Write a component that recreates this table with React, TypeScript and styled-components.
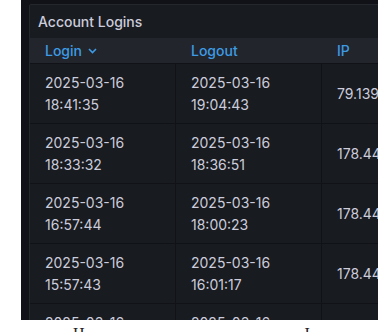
import React from "react";
import styled, { createGlobalStyle } from "styled-components";

const GlobalStyle = createGlobalStyle`
  body {
    margin: 0;
    background: #ffffff;
    font-family: Inter, "Noto Sans", sans-serif;
  }
`;

const Frame = styled.div`
  margin-left: 21px;
  width: 357px;
  height: 320px;
  background-color: #111217;
  overflow: hidden;
  padding: 4px 0 0 8px;
  box-sizing: border-box;
`;

const Panel = styled.div`
  width: 420px;
  background-color: #181b1f;
  border: 1px solid #24272d;
  border-radius: 2px;
`;

const PanelTitle = styled.div`
  height: 33px;
  display: flex;
  align-items: center;
  padding-left: 8px;
  color: #ccccdc;
  font-size: 14px;
  font-weight: 500;
`;

const Table = styled.div`
  display: grid;
  grid-template-columns: 146px 146px 146px;
`;

const HeadCell = styled.div`
  height: 25px;
  display: flex;
  align-items: center;
  padding-left: 15px;
  background-color: #22252b;
  color: #3d9be6;
  font-size: 14px;
  font-weight: 500;
  border-bottom: 1px solid #111217;
  gap: 6px;
`;

const Cell = styled.div<{ last?: boolean }>`
  height: 60px;
  display: flex;
  flex-direction: column;
  justify-content: center;
  padding-left: 15px;
  color: #ccccdc;
  font-size: 14px;
  line-height: 22px;
  white-space: nowrap;
  border-bottom: 1px solid #111217;
  border-right: ${p => (p.last ? "none" : "1px solid #111217")};
  box-sizing: border-box;
`;

const Caption = styled.div`
  display: flex;
  gap: 220px;
  padding: 4px 0 0 73px;
  font-family: "Liberation Serif", serif;
  font-size: 16px;
  line-height: 20px;
  color: #222;
`;

const Chevron = () => (
  <svg width="9" height="6" viewBox="0 0 9 6" fill="none">
    <path d="M1 1l3.5 3.5L8 1" stroke="#3d9be6" strokeWidth="1.6" />
  </svg>
);

const rows = [
  ["2025-03-16", "18:41:35", "2025-03-16", "19:04:43", "79.139.24.11"],
  ["2025-03-16", "18:33:32", "2025-03-16", "18:36:51", "178.44.12.90"],
  ["2025-03-16", "16:57:44", "2025-03-16", "18:00:23", "178.44.12.90"],
  ["2025-03-16", "15:57:43", "2025-03-16", "16:01:17", "178.44.12.90"],
  ["2025-03-16", "14:12:05", "2025-03-16", "15:20:48", "178.44.12.90"],
];

export default function App() {
  return (
    <>
      <GlobalStyle />
      <Frame>
        <Panel>
          <PanelTitle>Account Logins</PanelTitle>
          <Table>
            <HeadCell>
              Login <Chevron />
            </HeadCell>
            <HeadCell>Logout</HeadCell>
            <HeadCell>IP</HeadCell>
            {rows.map((r, i) => (
              <React.Fragment key={i}>
                <Cell>
                  <span>{r[0]}</span>
                  <span>{r[1]}</span>
                </Cell>
                <Cell>
                  <span>{r[2]}</span>
                  <span>{r[3]}</span>
                </Cell>
                <Cell last>
                  <span>{r[4]}</span>
                </Cell>
              </React.Fragment>
            ))}
          </Table>
        </Panel>
      </Frame>
      <Caption>
        <span>H</span>
        <span>I</span>
      </Caption>
    </>
  );
}
